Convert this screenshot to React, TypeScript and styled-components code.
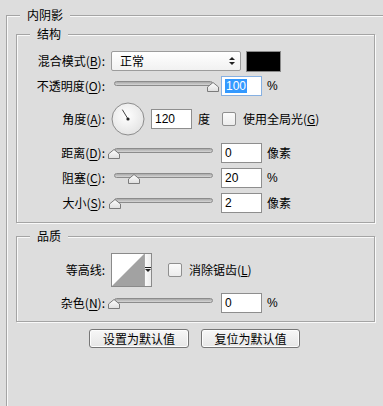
import React from "react";
import styled, { createGlobalStyle } from "styled-components";

const Global = createGlobalStyle`
  html, body { margin: 0; padding: 0; background: #dddddd; overflow: hidden; }
  body {
    font-family: "Noto Sans CJK SC", "Noto Sans", sans-serif;
    font-size: 12px;
    line-height: 14px;
    color: #000;
  }
  #root { width: 383px; height: 406px; overflow: hidden; }
`;

const Group = styled.fieldset<{ $outer?: boolean }>`
  margin: ${(p) => (p.$outer ? "8px 0 0 6px" : "0")};
  padding: 0;
  box-sizing: border-box;
  width: ${(p) => (p.$outer ? "420px" : "359px")};
  min-height: ${(p) => (p.$outer ? "420px" : "0")};
  border: 1px solid #a4a4a4;
  box-shadow: inset 1px 1px 0 #f9f9f9, 1px 1px 0 #f9f9f9;
  & + & { margin-top: 6px; }
`;

const Legend = styled.legend`
  margin-left: 13px;
  padding: 0 7px;
  height: 14px;
  line-height: 14px;
  background: #dddddd;
`;

const OuterBody = styled.div`
  padding: 5px 0 0 9px;
`;

const GroupBody = styled.div<{ $pt: number; $pb: number }>`
  padding: ${(p) => p.$pt}px 0 ${(p) => p.$pb}px 0;
`;

const Row = styled.div<{ $h: number; $mt?: number }>`
  display: flex;
  align-items: center;
  height: ${(p) => p.$h}px;
  margin-top: ${(p) => p.$mt ?? 0}px;
`;

const Label = styled.div`
  width: 88px;
  flex-shrink: 0;
  text-align: right;
  white-space: nowrap;
  u { text-underline-offset: 2px; }
`;

const Select = styled.div`
  margin-left: 6px;
  width: 130px;
  height: 20px;
  box-sizing: border-box;
  border: 1px solid #9c9c9c;
  border-radius: 2px;
  background: linear-gradient(#ffffff, #f1f1f1);
  display: flex;
  align-items: center;
  justify-content: space-between;
  padding: 0 5px 0 8px;
`;

const Swatch = styled.div`
  margin-left: 5px;
  width: 35px;
  height: 21px;
  box-sizing: border-box;
  border: 1px solid #8a8a8a;
  background: #000;
`;

const SliderBox = styled.div<{ $ml: number }>`
  position: relative;
  margin-left: ${(p) => p.$ml}px;
  width: 99px;
  height: 11px;
  flex-shrink: 0;
`;

const Track = styled.div`
  height: 5px;
  box-sizing: border-box;
  border: 1px solid #8b8b8b;
  border-radius: 3px;
  background: linear-gradient(#a9a9a9, #d6d6d6);
`;

const ThumbSvg = styled.svg`
  position: absolute;
  top: 1px;
`;

const Field = styled.div<{ $ml: number; $focus?: boolean }>`
  margin-left: ${(p) => p.$ml}px;
  width: 41px;
  height: 20px;
  box-sizing: border-box;
  border: 1px solid ${(p) => (p.$focus ? "#86b0e2" : "#8e8e8e")};
  background: #fff;
  padding-left: 3px;
  display: flex;
  align-items: center;
  font-family: "Liberation Sans", Arial, sans-serif;
  font-size: 12px;
  flex-shrink: 0;
`;

const Selected = styled.span`
  background: #3399ff;
  color: #fff;
  padding: 0 1px;
  line-height: 14px;
`;

const Unit = styled.div`
  margin-left: 5px;
  white-space: nowrap;
  font-family: "Liberation Sans", "Noto Sans CJK SC", sans-serif;
`;

const CnUnit = styled.div<{ $ml: number }>`
  margin-left: ${(p) => p.$ml}px;
  white-space: nowrap;
`;

const Check = styled.div<{ $ml: number }>`
  margin-left: ${(p) => p.$ml}px;
  width: 14px;
  height: 14px;
  box-sizing: border-box;
  border: 1px solid #8f8f8f;
  border-radius: 2px;
  background: linear-gradient(#fbfbfb, #ececec);
  flex-shrink: 0;
`;

const CheckLabel = styled.div`
  margin-left: 7px;
  white-space: nowrap;
`;

const DialSvg = styled.svg`
  margin-left: 6px;
  flex-shrink: 0;
`;

const Contour = styled.div`
  margin-left: 6px;
  width: 41px;
  height: 34px;
  box-sizing: border-box;
  border: 1px solid #8a8a8a;
  display: flex;
  background: #fff;
  flex-shrink: 0;
`;

const ContourDrop = styled.div`
  flex: 1;
  border-left: 1px solid #a8a8a8;
  background: linear-gradient(90deg, #fafafa, #ececec);
  display: flex;
  align-items: center;
  justify-content: center;
`;

const Buttons = styled.div`
  display: flex;
  gap: 12px;
  margin-top: 7px;
  padding-left: 73px;
`;

const Button = styled.div<{ $w: number }>`
  width: ${(p) => p.$w}px;
  height: 19px;
  box-sizing: border-box;
  border: 1px solid #767676;
  border-radius: 3px;
  background: linear-gradient(#f7f7f7, #e6e6e6);
  box-shadow: inset 0 0 0 1px #fdfdfd;
  display: flex;
  align-items: center;
  justify-content: center;
  white-space: nowrap;
`;

const Slider = ({ value, ml = 9 }: { value: number; ml?: number }) => (
  <SliderBox $ml={ml}>
    <Track />
    <ThumbSvg width="12" height="10" viewBox="0 0 12 10" style={{ left: value * 99 - 6 }}>
      <defs>
        <linearGradient id="tg" x1="0" y1="0" x2="0" y2="1">
          <stop offset="0" stopColor="#ffffff" />
          <stop offset="1" stopColor="#dedede" />
        </linearGradient>
      </defs>
      <polygon points="0.5,5 6,0.5 11.5,5 11.5,9.5 0.5,9.5" fill="url(#tg)" stroke="#7b7b7b" strokeWidth="1" />
    </ThumbSvg>
  </SliderBox>
);

const Dial = () => (
  <DialSvg width="34" height="34" viewBox="0 0 34 34">
    <defs>
      <radialGradient id="dg" cx="0.45" cy="0.4" r="0.6">
        <stop offset="0" stopColor="#ffffff" />
        <stop offset="1" stopColor="#e4e4e4" />
      </radialGradient>
    </defs>
    <circle cx="17" cy="17" r="16" fill="url(#dg)" stroke="#8c8c8c" strokeWidth="1" />
    <line x1="17" y1="17" x2="11.3" y2="7.6" stroke="#444" strokeWidth="1" />
    <circle cx="17" cy="17" r="1.6" fill="#222" />
  </DialSvg>
);

const SelectArrows = () => (
  <svg width="6" height="10" viewBox="0 0 6 10">
    <polygon points="0,4 3,1 6,4" fill="#222" />
    <polygon points="0,6 3,9 6,6" fill="#222" />
  </svg>
);

export default function App() {
  return (
    <>
      <Global />
      <Group $outer>
        <Legend>内阴影</Legend>
        <OuterBody>
          <Group>
            <Legend>结构</Legend>
            <GroupBody $pt={10} $pb={9}>
              <Row $h={20}>
                <Label>混合模式(<u>B</u>):</Label>
                <Select>
                  <span>正常</span>
                  <SelectArrows />
                </Select>
                <Swatch />
              </Row>
              <Row $h={20} $mt={5}>
                <Label>不透明度(<u>O</u>):</Label>
                <Slider value={1} />
                <Field $ml={8} $focus>
                  <Selected>100</Selected>
                </Field>
                <Unit>%</Unit>
              </Row>
              <Row $h={34} $mt={6}>
                <Label>角度(<u>A</u>):</Label>
                <Dial />
                <Field $ml={6}>120</Field>
                <CnUnit $ml={6}>度</CnUnit>
                <Check $ml={12} />
                <CheckLabel>使用全局光(<u>G</u>)</CheckLabel>
              </Row>
              <Row $h={20} $mt={7}>
                <Label>距离(<u>D</u>):</Label>
                <Slider value={0} />
                <Field $ml={8}>0</Field>
                <CnUnit $ml={5}>像素</CnUnit>
              </Row>
              <Row $h={20} $mt={5}>
                <Label>阻塞(<u>C</u>):</Label>
                <Slider value={0.2} />
                <Field $ml={8}>20</Field>
                <Unit>%</Unit>
              </Row>
              <Row $h={20} $mt={5}>
                <Label>大小(<u>S</u>):</Label>
                <Slider value={0.008} />
                <Field $ml={8}>2</Field>
                <CnUnit $ml={5}>像素</CnUnit>
              </Row>
            </GroupBody>
          </Group>
          <Group>
            <Legend>品质</Legend>
            <GroupBody $pt={10} $pb={8}>
              <Row $h={34}>
                <Label>等高线:</Label>
                <Contour>
                  <svg width="32" height="32" viewBox="0 0 32 32">
                    <rect width="32" height="32" fill="#fff" />
                    <polygon points="0,32 32,0 32,32" fill="#a2a2a2" />
                  </svg>
                  <ContourDrop>
                    <svg width="6" height="6" viewBox="0 0 6 6">
                      <rect x="0" y="0" width="6" height="1" fill="#222" />
                      <polygon points="0,2 6,2 3,5" fill="#222" />
                    </svg>
                  </ContourDrop>
                </Contour>
                <Check $ml={16} />
                <CheckLabel>消除锯齿(<u>L</u>)</CheckLabel>
              </Row>
              <Row $h={20} $mt={6}>
                <Label>杂色(<u>N</u>):</Label>
                <Slider value={0} />
                <Field $ml={8}>0</Field>
                <Unit>%</Unit>
              </Row>
            </GroupBody>
          </Group>
          <Buttons>
            <Button $w={100}>设置为默认值</Button>
            <Button $w={99}>复位为默认值</Button>
          </Buttons>
        </OuterBody>
      </Group>
    </>
  );
}
